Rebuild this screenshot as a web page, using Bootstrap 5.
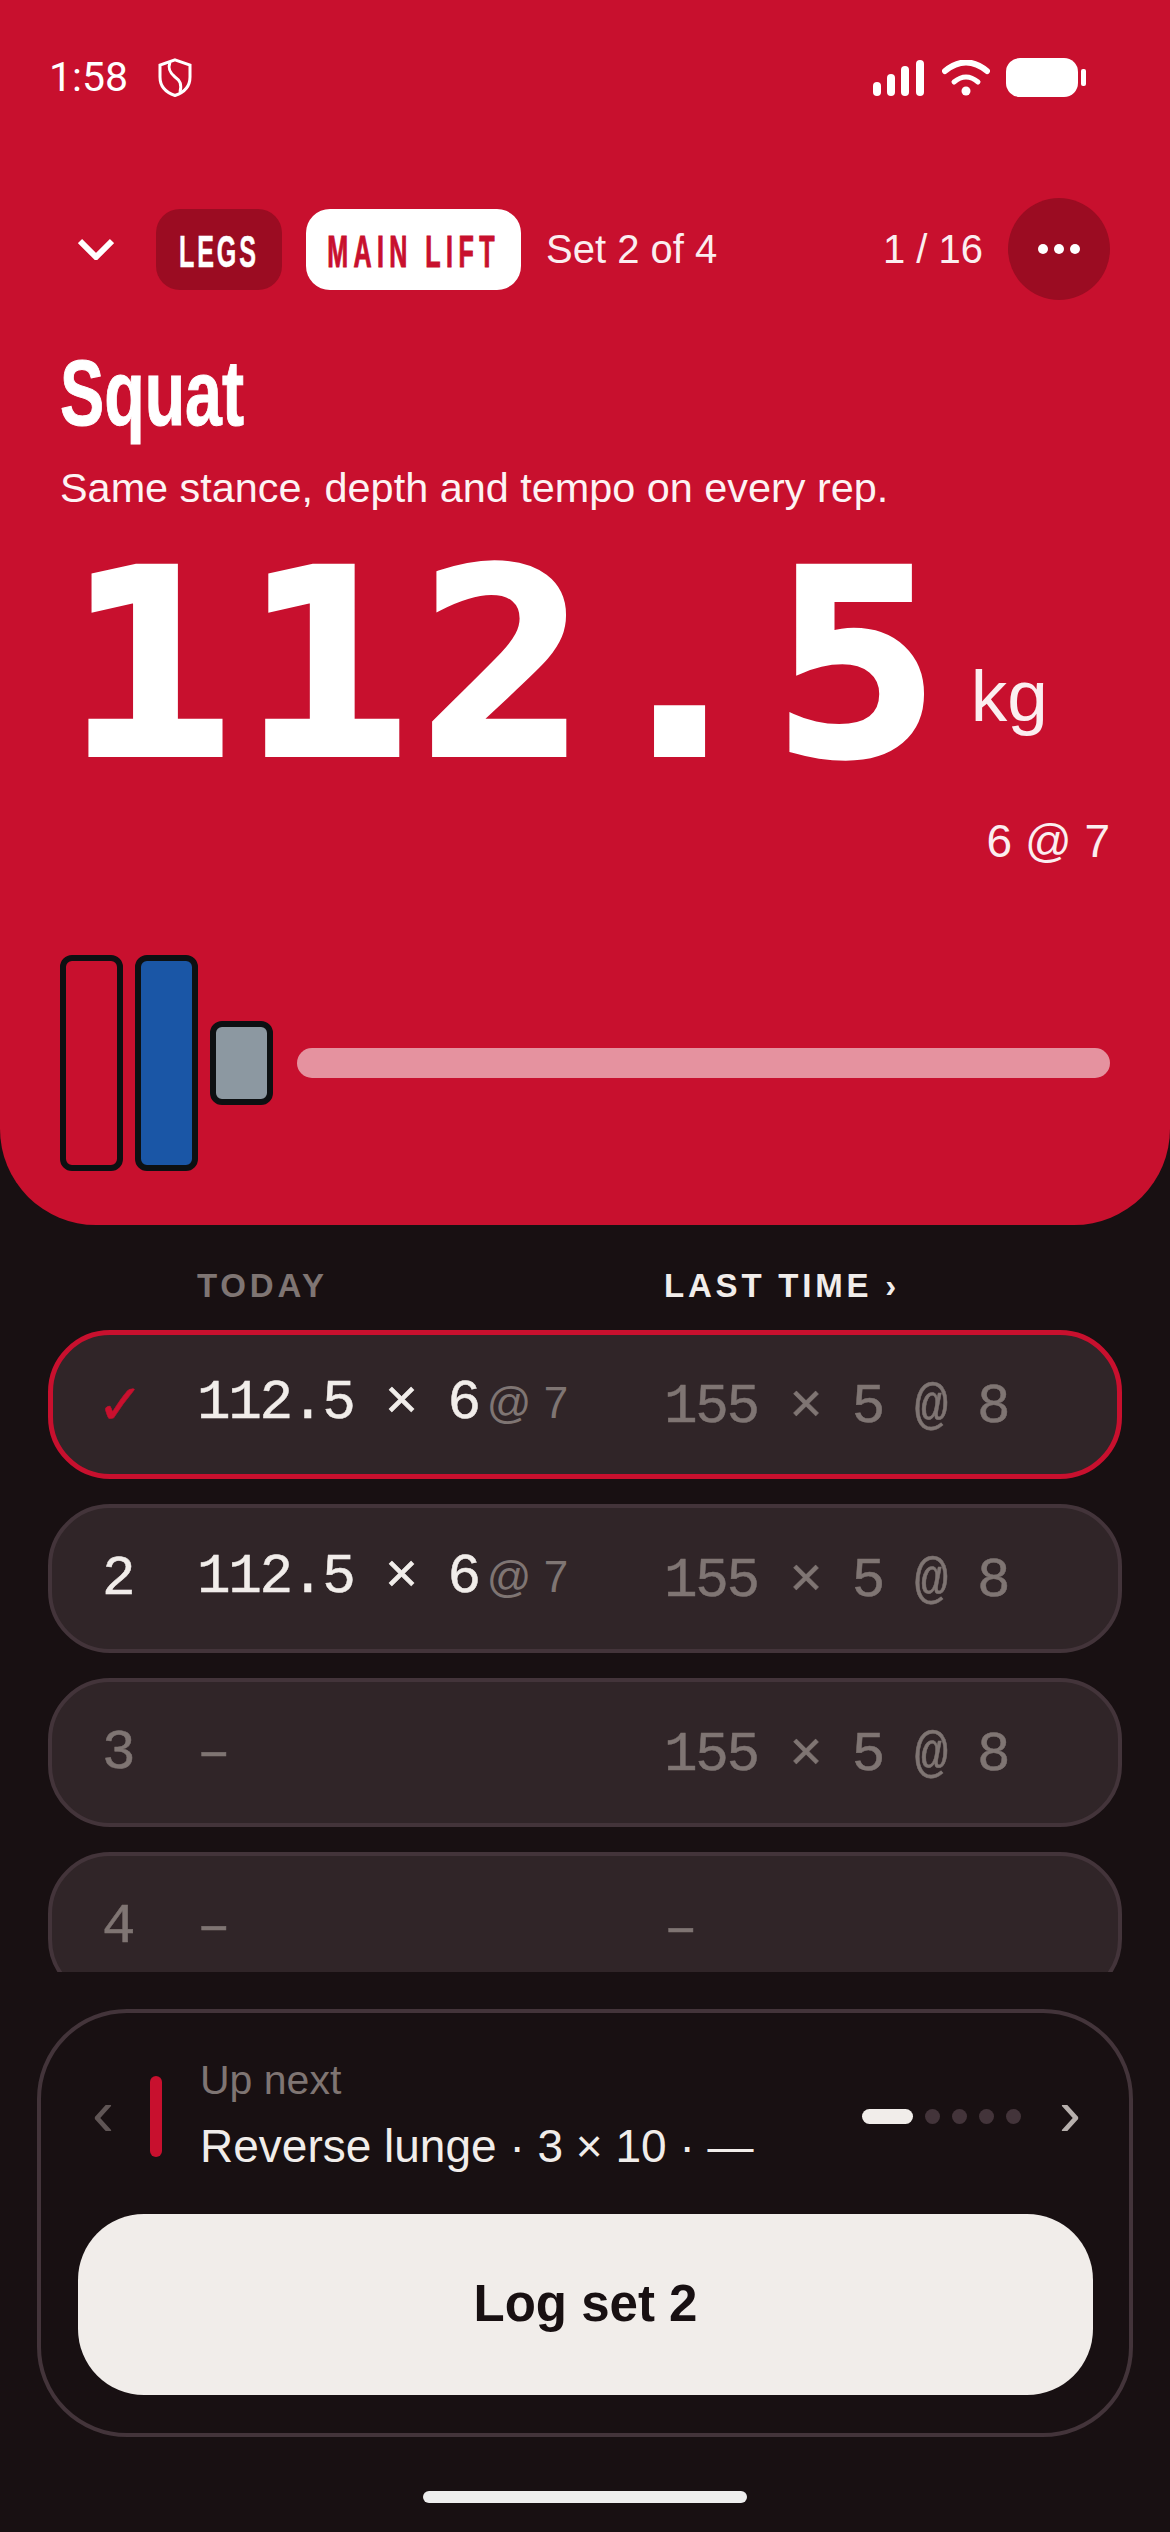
<!doctype html>
<html lang="en">
<head>
<meta charset="utf-8">
<title>Squat</title>
<link rel="stylesheet" href="https://cdn.jsdelivr.net/npm/bootstrap@5.3.0/dist/css/bootstrap.min.css">
<style>
html,body{margin:0;background:#181012}
body{font-family:"Liberation Sans",Arial,sans-serif;width:1170px;height:2532px;overflow:hidden;color:#f1edea}
.app{width:1170px;height:2532px}
.hero{background:#c8102e;height:1225px;border-radius:0 0 96px 96px;padding:58px 60px 0;color:#fff;flex:none}
.status{height:39px}
.clock{font-family:Roboto,sans-serif;font-size:41px;line-height:39px;margin-left:-11px;width:109px}
.navrow{height:102px;margin-top:101px}
.chev{margin-left:18px;width:36px;height:22px;margin-right:42px;flex:none}
.chip{height:81px;border-radius:24px;display:flex;align-items:center;justify-content:center;flex:none;overflow:hidden}
.chip span{font-family:"Liberation Sans",sans-serif;font-weight:700;font-size:44px;line-height:1;letter-spacing:5px;display:inline-block;white-space:nowrap;transform:scaleX(.57);-webkit-text-stroke:.5px currentColor;flex:none;position:relative;top:3px}
.chip-legs{width:126px;background:#9b0c22;color:#fff}
.chip-main{width:215px;background:#fff;color:#c8102e;margin-left:24px;margin-right:25px}
.chip-main span{letter-spacing:9.500px;-webkit-text-stroke:1px currentColor}
.meta{font-size:40px;line-height:1;white-space:nowrap;color:#fbeef0}
.more{width:102px;height:102px;border-radius:50%;background:#9b0c22;margin-left:25px;gap:6px;flex:none}
.more i{width:10px;height:10px;border-radius:50%;background:#fff;display:block}
.ttl{font-family:"Liberation Sans",sans-serif;font-weight:700;font-size:92px;line-height:100px;margin:43px 0 0;transform:scaleX(.72);transform-origin:0 50%;-webkit-text-stroke:1px #fff;white-space:nowrap}
.sub{font-size:41.400px;line-height:48px;margin:21px 0 0;color:#fdf3f4;white-space:nowrap}
.big{height:232px;margin-top:37px}
.num{font-family:"DejaVu Sans Mono",monospace;font-weight:700;font-size:277px;line-height:232px;margin-left:6px;letter-spacing:10px;color:#fff;transform:scaleY(.93);-webkit-text-stroke:6px #fff}
.unit{font-size:73px;line-height:1;color:#fbeef0;margin:0 0 49px 21px}
.reps{font-size:46px;line-height:56px;text-align:right;color:#fbeef0;margin-top:32px}
.plates{margin-top:86px;height:216px;gap:12px}
.plate{width:63px;border:6px solid #0d1012;border-radius:12px;flex:none}
.p-red{height:216px;background:#c8102e}
.p-blue{height:216px;background:#1a56a6}
.p-gray{height:84px;background:#8c98a1}
.barbell{height:30px;border-radius:15px;background:#e5929f;margin-left:12px;flex-grow:1}
.heads{padding:0 0 0 197px;height:38px;margin-top:42px;font-size:33px;line-height:38px;letter-spacing:3.800px;font-weight:600;color:#7f7573;flex:none}
.heads span:first-child{width:467px}
.heads span:last-child{color:#f1edea;font-weight:700}
.rows{margin:25px 48px 0;height:642px;overflow:hidden;gap:25px;flex:none}
.setrow{height:149px;flex:none;border:4px solid #43343a;background:#302528;border-radius:62px;font-family:"Liberation Mono",monospace;font-size:56px;letter-spacing:-2.300px;color:#7f7573;padding-left:50px;-webkit-text-stroke:.5px currentColor}
.setrow.done{border-color:#c8102e;border-width:5px;padding-left:49px}
.c-n{width:95px;flex:none}
.c-t{width:467px;flex:none;white-space:pre;color:#f1edea;position:relative;top:-2px}
.c-l{white-space:pre;position:relative;top:2px}
.c-t.empty{color:#7f7573;top:0}
.rpe{font-family:"Liberation Sans",sans-serif;font-size:44px;color:#7f7573;margin-left:8px;letter-spacing:0;-webkit-text-stroke:0}
.on{color:#f1edea}
.chk{color:#c8102e;font-family:"DejaVu Sans",sans-serif;font-size:56px;margin-left:-5px;width:100px}
.dock{margin:37px 37px 0;height:428px;border:4px solid #43343a;border-radius:90px;padding:0 37px;flex:none}
.info{height:201px;padding:6px 11px 0 14px}
.ar{font-size:66px;line-height:1;width:58px;flex:none;color:#5f5555;position:relative;top:-4px}
.tick{width:12px;height:81px;border-radius:6px;background:#c8102e;margin-right:38px;margin-top:0;flex:none}
.lab{font-size:41px;line-height:46px;color:#7f7573;margin-bottom:13px}
.nxt{font-size:46px;line-height:60px;color:#f1edea;white-space:nowrap}
.pgr{gap:12px;margin-left:auto}
.pgr i{width:15px;height:15px;border-radius:50%;background:#43343a;display:block}
.pgr i:first-child{width:51px;border-radius:8px;background:#f1edea}
.ar-r{color:#b7b0ad;margin-left:38px;width:auto}
.logbtn{width:1015px;height:181px;border-radius:66px;background:#f1edea;color:#181012;font-size:51px;font-weight:700;border:0;padding:0}
.home{width:324px;height:12px;border-radius:6px;background:#eeeeee;margin:54px auto 0;flex:none}
</style>
</head>
<body>
<div class="app d-flex flex-column">
  <section class="hero">
    <div class="status d-flex align-items-center">
      <div class="clock">1:58</div>
      <svg width="34" height="39" viewBox="0 0 34 39" fill="none" stroke="#fff" stroke-width="3"><path d="M17 1.800 32 7v12c0 9-6 15.500-15 18.500C8 34.500 2 28 2 19V7z"/><path d="M12 4c-2.500 7 0 11 5 15 5 3.500 7 7 5 15"/></svg>
      <div class="ms-auto d-flex align-items-center">
        <svg width="51" height="36" viewBox="0 0 51 36" fill="#fff"><rect x="0" y="22" width="8" height="14" rx="4"/><rect x="14" y="14" width="8" height="22" rx="4"/><rect x="28" y="6" width="8" height="30" rx="4"/><rect x="43" y="0" width="8" height="36" rx="4"/></svg>
        <svg style="margin-left:18px" width="48" height="36" viewBox="0 0 48 36" fill="none" stroke="#fff" stroke-width="6" stroke-linecap="round"><path d="M3 11Q24-6 45 11"/><path d="M12 22Q24 12 36 22" stroke-width="5"/><circle cx="24" cy="31" r="4.500" fill="#fff" stroke="none"/></svg>
        <div class="d-flex align-items-center ms-3" style="margin-right:24px">
          <svg width="80" height="39" viewBox="0 0 80 39" fill="#fff"><rect width="72" height="39" rx="14"/><rect x="75" y="11" width="5" height="17" rx="2"/></svg>
        </div>
      </div>
    </div>
    <div class="navrow d-flex align-items-center">
      <svg class="chev" viewBox="0 0 36 22" fill="none" stroke="#fff" stroke-width="6"><path d="M2 3 18 19 34 3"/></svg>
      <div class="chip chip-legs"><span>LEGS</span></div>
      <div class="chip chip-main"><span>MAIN LIFT</span></div>
      <div class="meta">Set 2 of 4</div>
      <div class="meta ms-auto">1 / 16</div>
      <div class="more d-flex align-items-center justify-content-center"><i></i><i></i><i></i></div>
    </div>
    <h1 class="ttl">Squat</h1>
    <p class="sub">Same stance, depth and tempo on every rep.</p>
    <div class="big d-flex align-items-end">
      <div class="num">112.5</div>
      <div class="unit">kg</div>
    </div>
    <div class="reps">6 @ 7</div>
    <div class="plates d-flex align-items-center">
      <div class="plate p-red"></div>
      <div class="plate p-blue"></div>
      <div class="plate p-gray"></div>
      <div class="barbell"></div>
    </div>
  </section>

  <div class="heads d-flex"><span>TODAY</span><span>LAST TIME ›</span></div>

  <div class="rows d-flex flex-column">
    <div class="setrow done d-flex align-items-center"><div class="c-n chk">✓</div><div class="c-t">112.5 × 6<span class="rpe">@ 7</span></div><div class="c-l">155 × 5 @ 8</div></div>
    <div class="setrow d-flex align-items-center"><div class="c-n on">2</div><div class="c-t">112.5 × 6<span class="rpe">@ 7</span></div><div class="c-l">155 × 5 @ 8</div></div>
    <div class="setrow d-flex align-items-center"><div class="c-n">3</div><div class="c-t empty">–</div><div class="c-l">155 × 5 @ 8</div></div>
    <div class="setrow d-flex align-items-center"><div class="c-n">4</div><div class="c-t empty">–</div><div class="c-l">–</div></div>
  </div>

  <div class="dock">
    <div class="info d-flex align-items-center">
      <div class="ar">‹</div>
      <div class="tick"></div>
      <div>
        <div class="lab">Up next</div>
        <div class="nxt">Reverse lunge · 3 × 10 · —</div>
      </div>
      <div class="pgr d-flex align-items-center"><i></i><i></i><i></i><i></i><i></i></div>
      <div class="ar ar-r">›</div>
    </div>
    <button class="logbtn btn" type="button">Log set 2</button>
  </div>
  <div class="home"></div>
</div>
</body>
</html>
